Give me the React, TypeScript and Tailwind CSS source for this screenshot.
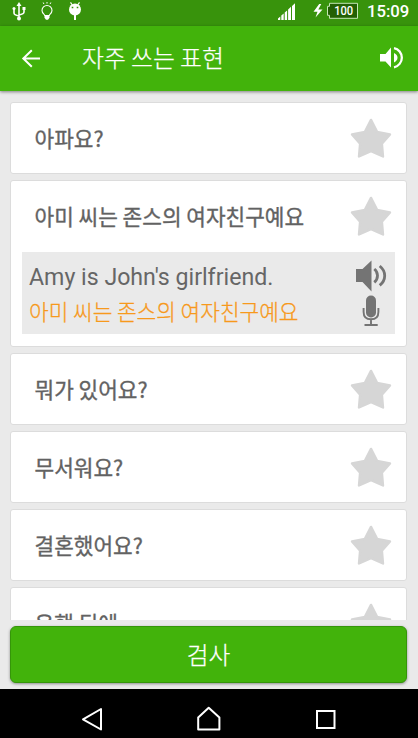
import React from "react";

const KR = "font-['Noto_Sans_CJK_KR',sans-serif]";

function Star() {
  return (
    <svg className="h-[42px] w-[42px] shrink-0" viewBox="0 0 42 42" fill="#d6d6d6" stroke="#d6d6d6" strokeWidth="2.4" strokeLinejoin="round">
      <path d="M21 2.900 27.100 14.900 40 17.500 31.900 26.600 33 39.500 21 34.200 9 39.500 10.100 26.600 2 17.500 14.900 14.900Z" />
    </svg>
  );
}

function CardHead({ text }: { text: string }) {
  return (
    <div className="flex h-[70px] shrink-0 items-center justify-between pr-[14px] pl-[23.5px]">
      <span className={`${KR} text-[21.35px] leading-[30px] whitespace-nowrap text-[#626262] [-webkit-text-stroke:0.35px_#626262]`}>
        {text}
      </span>
      <Star />
    </div>
  );
}

function Card({ text, children }: { text: string; children?: React.ReactNode }) {
  return (
    <div className="shrink-0 rounded-[3px] border border-[#dcdcdc] bg-white">
      <CardHead text={text} />
      {children}
    </div>
  );
}

function StatusBar() {
  return (
    <div className="flex h-[26px] shrink-0 items-start bg-[#38930c]">
      <svg className="h-[26px] w-[90px]" viewBox="0 0 90 26" fill="none" stroke="#fff">
        <path d="M19 4v15M14 9v4q0 2 5 3M24 9v3q0 2-5 3" strokeWidth="1.6" />
        <path d="m19 2 2.5 4h-5z" fill="#fff" stroke="none" />
        <circle cx="19" cy="18.5" r="2" fill="#fff" stroke="none" />
        <circle cx="14" cy="8.5" r="1.5" fill="#fff" stroke="none" />
        <path d="M22.5 7h3v3h-3z" fill="#fff" stroke="none" />
        <path d="M44.7 15.5c0-1-2.7-2.2-2.7-5a5 5 0 0 1 10 0c0 2.8-2.7 4-2.7 5z" strokeWidth="1.1" />
        <path d="M44.5 16h5v1.8L48 19.7h-2l-1.500-1.900z" fill="#fff" stroke="none" />
        <path d="M47 2v1.600M43.200 2.500l.7 1.500M50.800 2.500 50.100 4" strokeWidth="1" />
        <circle cx="75" cy="9.600" r="6" fill="#fff" stroke="none" />
        <path d="m70.500 2.300 1.800 2.700M79.500 2.300 77.700 5" strokeWidth="1.200" />
        <path d="M75 15v5" strokeWidth="2" />
        <path d="M71.700 7.500h1.600M76.700 7.500h1.600" stroke="#38930c" strokeWidth="1.500" />
      </svg>
      <div className="grow" />
      <svg className="h-[26px] w-[83px]" viewBox="275 0 83 26">
        <path d="M278 20v-1.500l2.300-2V20zM281.300 20v-4.500l2.400-2V20zM284.700 20v-7.400l2.400-2.100V20zM288.100 20v-10.400l2.900-2.800V20zM292 20V5.900l3-2.700V20z" fill="#fff" />
        <path d="m319.200 4-5.700 7.800h4l-2 5.700 7-7.900h-4.200l3-5.600z" fill="#fff" />
        <path d="M329.500 3.300h28v15h-28v-3h-2v-9h2z" fill="#236004" stroke="#c4e7b5" />
        <text x="343.700" y="15.400" textAnchor="middle" fontSize="12" fontWeight="500" textLength="19" lengthAdjust="spacingAndGlyphs" fill="#fff" className="font-['Roboto',sans-serif]">100</text>
      </svg>
      <span className="mr-[8px] ml-[9px] w-[43px] font-['Roboto',sans-serif] text-[16.7px] leading-[23px] font-medium whitespace-nowrap text-white">
        15:09
      </span>
    </div>
  );
}

function Header() {
  return (
    <header className="z-10 flex h-[65px] shrink-0 items-center bg-[#42b30b] pr-[14px] pl-[21px] shadow-[0_1px_3px_rgba(0,0,0,0.45)]">
      <svg className="h-[20px] w-[20px]" viewBox="0 0 20 20" fill="none" stroke="#fff" strokeWidth="2">
        <path d="M19 9.500H2M10.800 1.300 2.300 9.500l8.500 8.300" />
      </svg>
      <h1 className={`${KR} mb-[3px] ml-[41px] text-[23.8px] leading-[36px] font-light whitespace-nowrap text-white [-webkit-text-stroke:0.25px_#fff]`}>자주 쓰는 표현</h1>
      <svg className="mb-[1px] ml-auto h-[24px] w-[25px]" viewBox="0 0 25 24">
        <path d="M1 8h5.500L12 1.500v20L6.500 15.500H1z" fill="#fff" />
        <path d="M15 7q3.500 1.800 3.500 4.700T15 16.400z" fill="#fff" />
        <path d="M15 2.100a9.800 9.800 0 0 1 0 19.200" fill="none" stroke="#fff" strokeWidth="2.300" />
      </svg>
    </header>
  );
}

function Translation() {
  return (
    <div className="mx-[11px] mt-[1px] mb-[12px] flex h-[82px] justify-between bg-[#eaeaea] pr-[7px] pl-[7px]">
      <div className="flex flex-col pt-[8px]">
        <span className="h-[33px] font-['Roboto',sans-serif] text-[23.15px] leading-[36px] whitespace-nowrap text-[#666]">
          Amy is John's girlfriend.
        </span>
        <span className={`${KR} h-[36px] text-[21.35px] leading-[36px] font-light whitespace-nowrap text-[#f7991c] [-webkit-text-stroke:0.3px_#f7991c]`}>
          아미 씨는 존스의 여자친구예요
        </span>
      </div>
      <svg className="h-[82px] w-[34px] shrink-0" viewBox="354 252 34 82" fill="#747474">
        <path d="M356 269h6.500l9-8.500v31l-9-9.500H356z" />
        <path d="M374.300 269q3.200 2.500 3.200 6.600t-3.200 6.800M379.700 266q5 4 5 9.700t-5 9.700" fill="none" stroke="#747474" strokeWidth="2.800" />
        <rect x="366" y="295.500" width="10" height="22" rx="5" />
        <path d="M363.600 308v4q0 7.300 7.400 7.300t7.400-7.300v-4M371 319.500v5M364.500 325h13.200" fill="none" stroke="#747474" strokeWidth="1.900" />
      </svg>
    </div>
  );
}

export default function App() {
  return (
    <div className="flex h-[738px] w-[418px] flex-col overflow-hidden bg-[#eaeaea]">
      <StatusBar />
      <Header />
      <main className="flex h-[529px] shrink-0 flex-col gap-[6px] overflow-hidden px-[10px] pt-[11px] pr-[11px]">
        <Card text="아파요?" />
        <Card text="아미 씨는 존스의 여자친구예요">
          <Translation />
        </Card>
        <Card text="뭐가 있어요?" />
        <Card text="무서워요?" />
        <Card text="결혼했어요?" />
        <Card text="은행 뒤에" />
      </main>
      <div className="h-[69px] shrink-0 px-[10px] pt-[6px] pr-[11px]">
        <button className={`${KR} flex h-[57px] w-full items-center justify-center rounded-[6px] border border-[#359609] bg-[#42b30b] text-[23.7px] font-light text-white shadow-[0_1px_3px_rgba(0,0,0,0.4)] [-webkit-text-stroke:0.25px_#fff]`}>
          검사
        </button>
      </div>
      <nav className="flex h-[49px] shrink-0 items-center justify-between bg-black px-[80px] pt-[11px]">
        <svg className="h-[28px] w-[24px]" viewBox="80 705 24 28" fill="none" stroke="#fff" strokeWidth="2" strokeLinejoin="round">
          <path d="M101 709v20.500L83 719.300z" />
        </svg>
        <svg className="h-[28px] w-[28px]" viewBox="195 705 28 28" fill="none" stroke="#fff" strokeWidth="2" strokeLinejoin="round">
          <path d="m208.700 707.700 10.700 9.800v12h-21.200v-12z" />
        </svg>
        <svg className="h-[28px] w-[24px]" viewBox="314 705 24 28" fill="none" stroke="#fff" strokeWidth="2">
          <path d="M317 711h17.500v17H317z" />
        </svg>
      </nav>
    </div>
  );
}
